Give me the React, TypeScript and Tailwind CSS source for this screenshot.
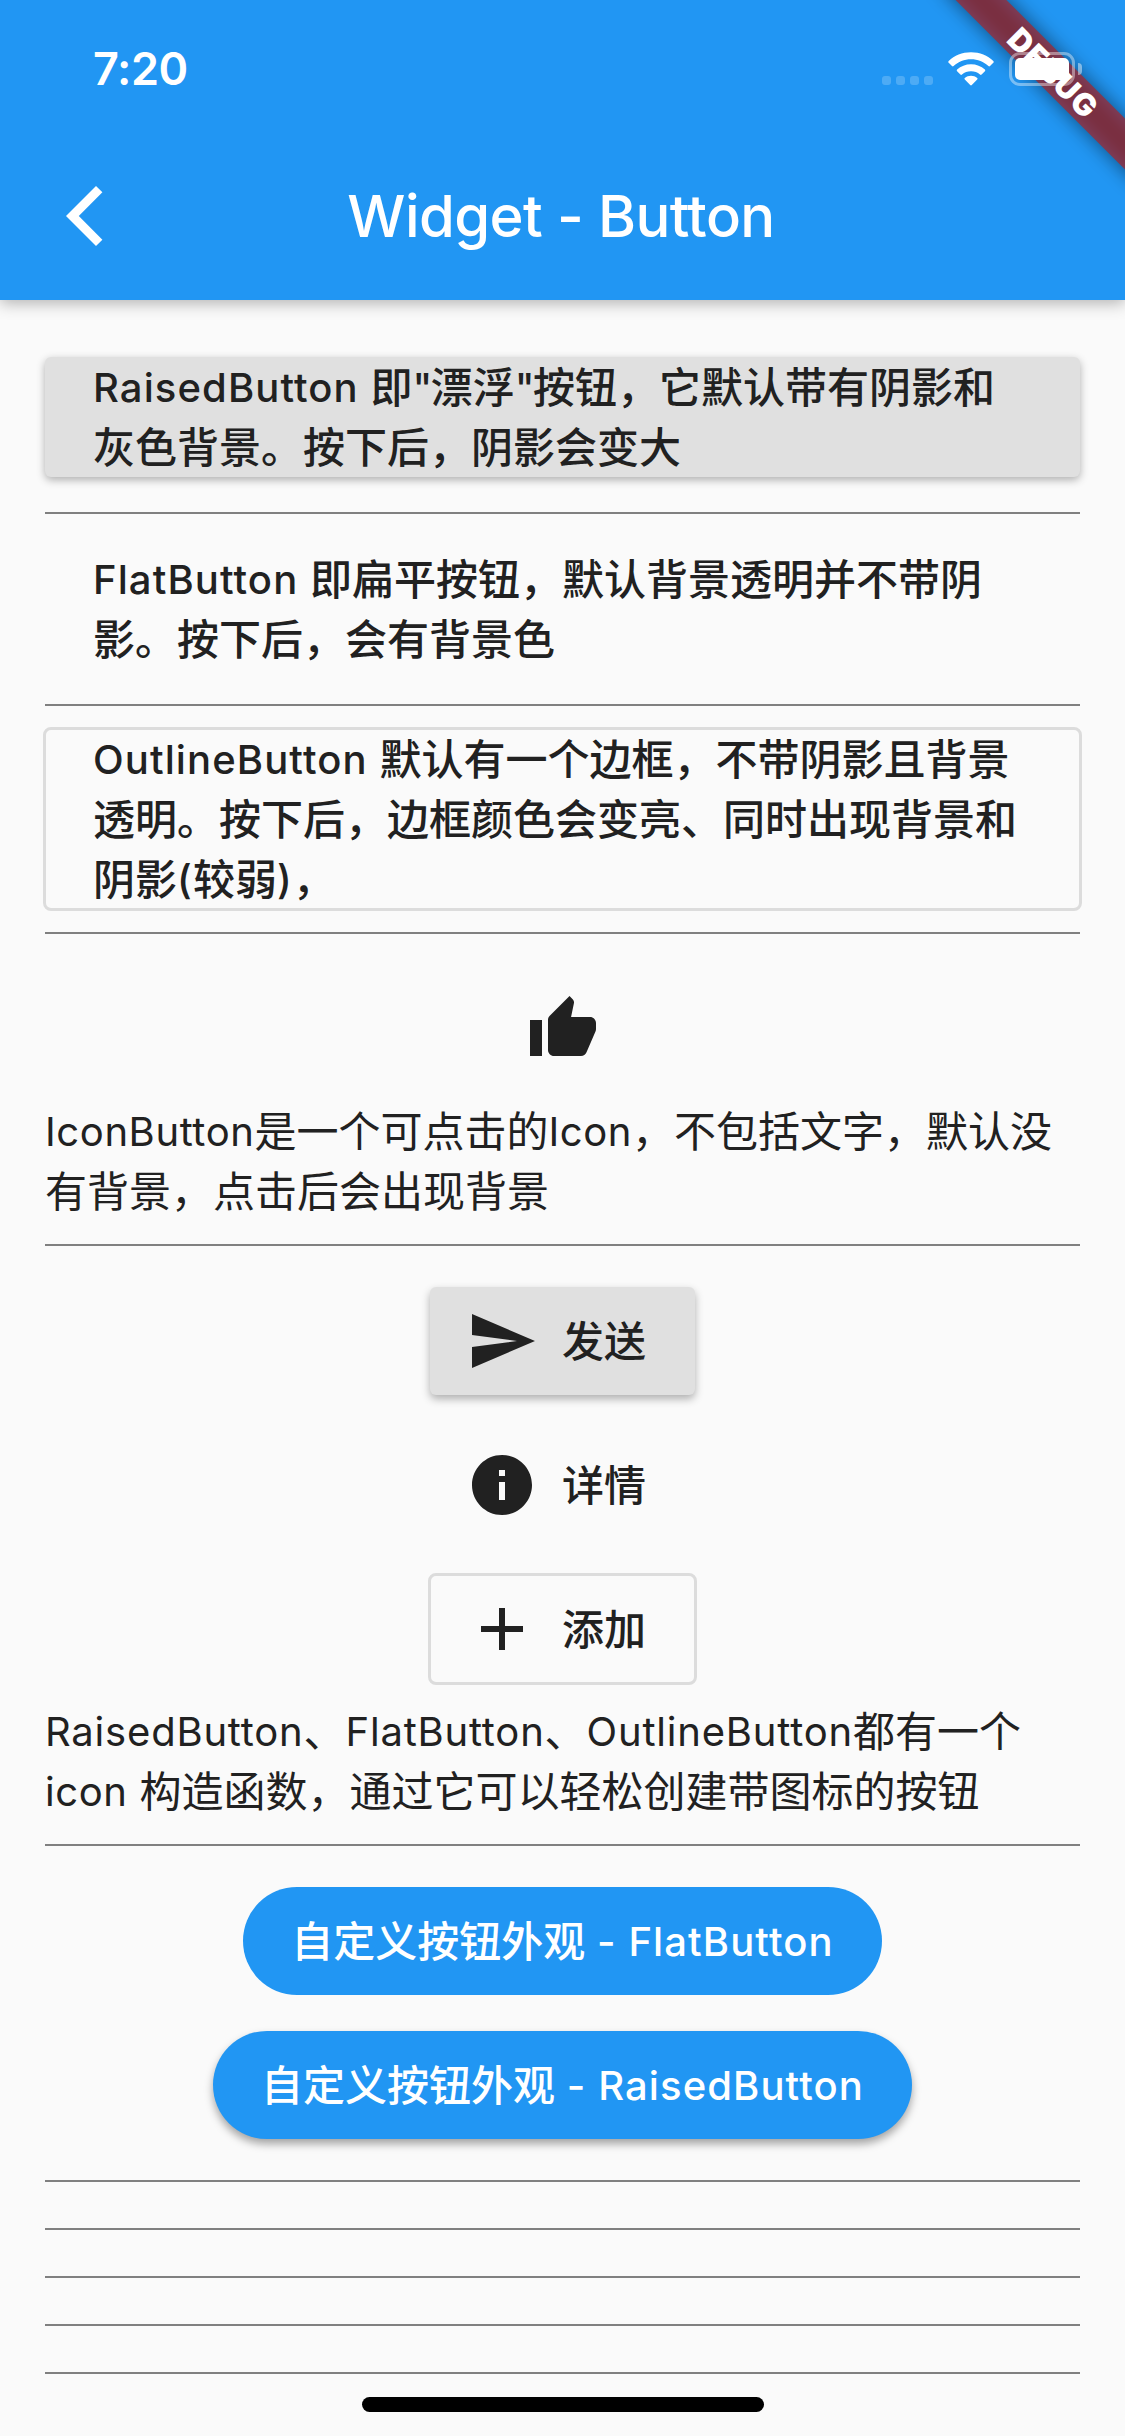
import React from "react";

type Kids = { children: React.ReactNode };

const En = ({ children }: Kids) => (
  <span className="align-[1px] text-[40px] leading-none tracking-[1.100px]">{children}</span>
);

const BodyEn = ({ children }: Kids) => (
  <span className="align-[1px] text-[40px] leading-none tracking-[0.800px]">{children}</span>
);

const NarrowEn = ({ children }: Kids) => (
  <span className="align-[1px] text-[40px] leading-none tracking-[0.600px]">{children}</span>
);

const Quote = () => (
  <span className="align-[1px] text-[40px] leading-none tracking-[-1.500px]">"</span>
);

const Line = ({ children }: Kids) => (
  <span className="block h-[60px] whitespace-nowrap leading-[62px]">{children}</span>
);

const Divider = () => (
  <div className="flex h-[48px] shrink-0 flex-col justify-center">
    <div className="h-[2px] bg-[#808080]" />
  </div>
);

const Row = ({ children }: Kids) => (
  <div className="flex h-[144px] shrink-0 items-center justify-center">{children}</div>
);

const Icon = ({ d }: { d: string }) => (
  <svg viewBox="0 0 24 24" className="size-[72px] shrink-0 fill-[#212121]">
    <path d={d} />
  </svg>
);

function StatusIcons() {
  return (
    <div className="relative flex items-center pt-[1px]">
      <div className="flex gap-[5px] pt-[23px]">
        {[0, 1, 2, 3].map((i) => (
          <div key={i} className="size-[9px] rounded-[3px] bg-white/20" />
        ))}
      </div>
      <svg viewBox="0 0 46 34" className="ml-[15px] h-[34px] w-[46px] fill-white">
        <path d="M23 0.3C31.8 0.3 39.6 3.6 45.3 9.1a1.1 1.1 0 0 1 0 1.6L42 14a1.1 1.1 0 0 1-1.6 0C35.8 9.7 29.700 7.200 23 7.200S10.200 9.700 5.600 14A1.100 1.100 0 0 1 4 14L0.700 10.700a1.100 1.100 0 0 1 0-1.600C6.400 3.600 14.200 0.300 23 0.300Z" />
        <path d="M23 12.300c5.300 0 10.200 2 13.900 5.300a1.100 1.100 0 0 1 0 1.600l-3.300 3.300a1.100 1.100 0 0 1-1.600 0A13.500 13.500 0 0 0 23 19.200a13.500 13.500 0 0 0-9 3.300 1.100 1.100 0 0 1-1.600 0L9.100 19.200a1.100 1.100 0 0 1 0-1.600C12.800 14.300 17.700 12.300 23 12.300Z" />
        <path d="M23 23.800c2.300 0 4.500.8 6.200 2.200a1.100 1.100 0 0 1 0 1.600L23.800 33a1.100 1.100 0 0 1-1.600 0l-5.400-5.400a1.100 1.100 0 0 1 0-1.600C18.500 24.600 20.700 23.800 23 23.800Z" />
      </svg>
      <div className="ml-[15px] flex h-[34px] w-[66px] rounded-[11px] border-[3px] border-white/40 p-[3px]">
        <div className="flex-1 rounded-[5px] bg-white" />
      </div>
      <div className="ml-[3px] h-[12px] w-[4px] rounded-r-full bg-white/45" />
    </div>
  );
}

function DebugBanner() {
  return (
    <div className="absolute inset-0 overflow-hidden">
      <div className="absolute right-[-67.900px] top-[54px] h-[36px] w-[280px] rotate-45 bg-black/50 blur-[10px]" />
      <div className="absolute right-[-67.900px] top-[54px] flex h-[36px] w-[280px] rotate-45 items-center justify-center bg-[#b71c1c]/63 pl-[2px] text-[31px] font-black leading-none tracking-[1px] text-white">
        DEBUG
      </div>
    </div>
  );
}

export default function App() {
  return (
    <div className="flex h-[2436px] w-[1125px] flex-col overflow-hidden bg-[#fafafa] font-['Inter','Noto_Sans_CJK_SC',sans-serif] text-[42px] text-[#212121]">
      <header className="relative z-10 h-[300px] shrink-0 bg-[#2196f3] text-white shadow-[0_3px_15px_rgba(0,0,0,0.3)]">
        <DebugBanner />
        <div className="relative flex h-[132px] items-center justify-between pl-[93px] pr-[43px] pt-[4px]">
          <div className="text-[45px] font-semibold leading-none tracking-[-0.400px]">7:20</div>
          <StatusIcons />
        </div>
        <div className="relative flex h-[168px] items-center justify-center">
          <svg viewBox="0 0 37 60" className="absolute left-[66px] top-[54px] h-[60px] w-[37px] fill-white">
            <path d="M30 0L0 30l30 30 6.400-6.300L12.800 30 36.400 6.300z" />
          </svg>
          <h1 className="pr-[3px] text-[58px] font-medium leading-none tracking-[-0.600px] [font-feature-settings:'calt'_0]">
            Widget - Button
          </h1>
        </div>
      </header>

      <main className="flex flex-1 flex-col px-[45px] pt-[45px] [font-feature-settings:'calt'_0]">
        <button className="my-[12px] h-[120px] shrink-0 rounded-[6px] bg-[#e0e0e0] px-[48px] text-left font-medium shadow-[0_3px_8px_rgba(0,0,0,0.3)]">
          <Line><En>RaisedButton </En>即<Quote />漂浮<Quote />按钮，它默认带有阴影和</Line>
          <Line>灰色背景。按下后，阴影会变大</Line>
        </button>
        <Divider />
        <button className="h-[144px] shrink-0 px-[48px] text-left font-medium">
          <Line><En>FlatButton </En>即扁平按钮，默认背景透明并不带阴</Line>
          <Line>影。按下后，会有背景色</Line>
        </button>
        <Divider />
        <button className="h-[180px] shrink-0 rounded-[6px] px-[48px] text-left font-medium outline-[3px] outline-offset-[-1.500px] outline-[#dcdcdc]">
          <Line><En>OutlineButton </En>默认有一个边框，不带阴影且背景</Line>
          <Line>透明。按下后，边框颜色会变亮、同时出现背景和</Line>
          <Line>阴影<En>(</En>较弱<En>)</En>，</Line>
        </button>
        <Divider />
        <Row>
          <Icon d="M1 21h4V9H1v12zm22-11c0-1.100-.9-2-2-2h-6.310l.950-4.570.030-.320c0-.410-.170-.790-.440-1.060L14.170 1 7.590 7.590C7.220 7.950 7 8.450 7 9v10c0 1.100.900 2 2 2h9c.830 0 1.540-.5 1.840-1.220l3.020-7.050c.090-.230.140-.470.140-.730v-2z" />
        </Row>
        <p>
          <Line><NarrowEn>IconButton</NarrowEn>是一个可点击的<NarrowEn>Icon</NarrowEn>，不包括文字，默认没</Line>
          <Line>有背景，点击后会出现背景</Line>
        </p>
        <Divider />
        <Row>
          <button className="flex h-[108px] w-[265px] items-center gap-[24px] rounded-[6px] bg-[#e0e0e0] pl-[36px] font-medium leading-[60px] shadow-[0_4px_8px_rgba(0,0,0,0.3)]">
            <Icon d="M2.010 21L23 12 2.010 3 2 10l15 2-15 2z" />
            <span className="pt-[1px]">发送</span>
          </button>
        </Row>
        <Row>
          <button className="flex h-[108px] w-[265px] items-center gap-[24px] pl-[36px] font-medium leading-[60px]">
            <Icon d="M12 2C6.480 2 2 6.480 2 12s4.480 10 10 10 10-4.480 10-10S17.520 2 12 2zm1 15h-2v-6h2v6zm0-8h-2V7h2v2z" />
            <span className="pt-[1px]">详情</span>
          </button>
        </Row>
        <Row>
          <button className="flex h-[108px] w-[265px] items-center gap-[24px] rounded-[6px] pl-[36px] font-medium leading-[60px] outline-[3px] outline-offset-[-1.500px] outline-[#dcdcdc]">
            <Icon d="M19 13h-6v6h-2v-6H5v-2h6V5h2v6h6v2z" />
            <span className="pt-[1px]">添加</span>
          </button>
        </Row>
        <p>
          <Line><BodyEn>RaisedButton</BodyEn>、<BodyEn>FlatButton</BodyEn>、<BodyEn>OutlineButton</BodyEn>都有一个</Line>
          <Line><NarrowEn>icon </NarrowEn>构造函数，通过它可以轻松创建带图标的按钮</Line>
        </p>
        <Divider />
        <Row>
          <button className="flex h-[108px] w-[639px] justify-center rounded-full bg-[#2196f3] pt-[24px] font-medium text-white">
            <Line>自定义按钮外观<En> - FlatButton</En></Line>
          </button>
        </Row>
        <Row>
          <button className="flex h-[108px] w-[699px] justify-center rounded-full bg-[#2196f3] pt-[24px] font-medium text-white shadow-[0_5px_9px_rgba(0,0,0,0.35)]">
            <Line>自定义按钮外观<En> - RaisedButton</En></Line>
          </button>
        </Row>
        <Divider />
        <Divider />
        <Divider />
        <Divider />
        <Divider />
        <div className="mx-auto h-[15px] w-[402px] rounded-full bg-black" />
      </main>
    </div>
  );
}
